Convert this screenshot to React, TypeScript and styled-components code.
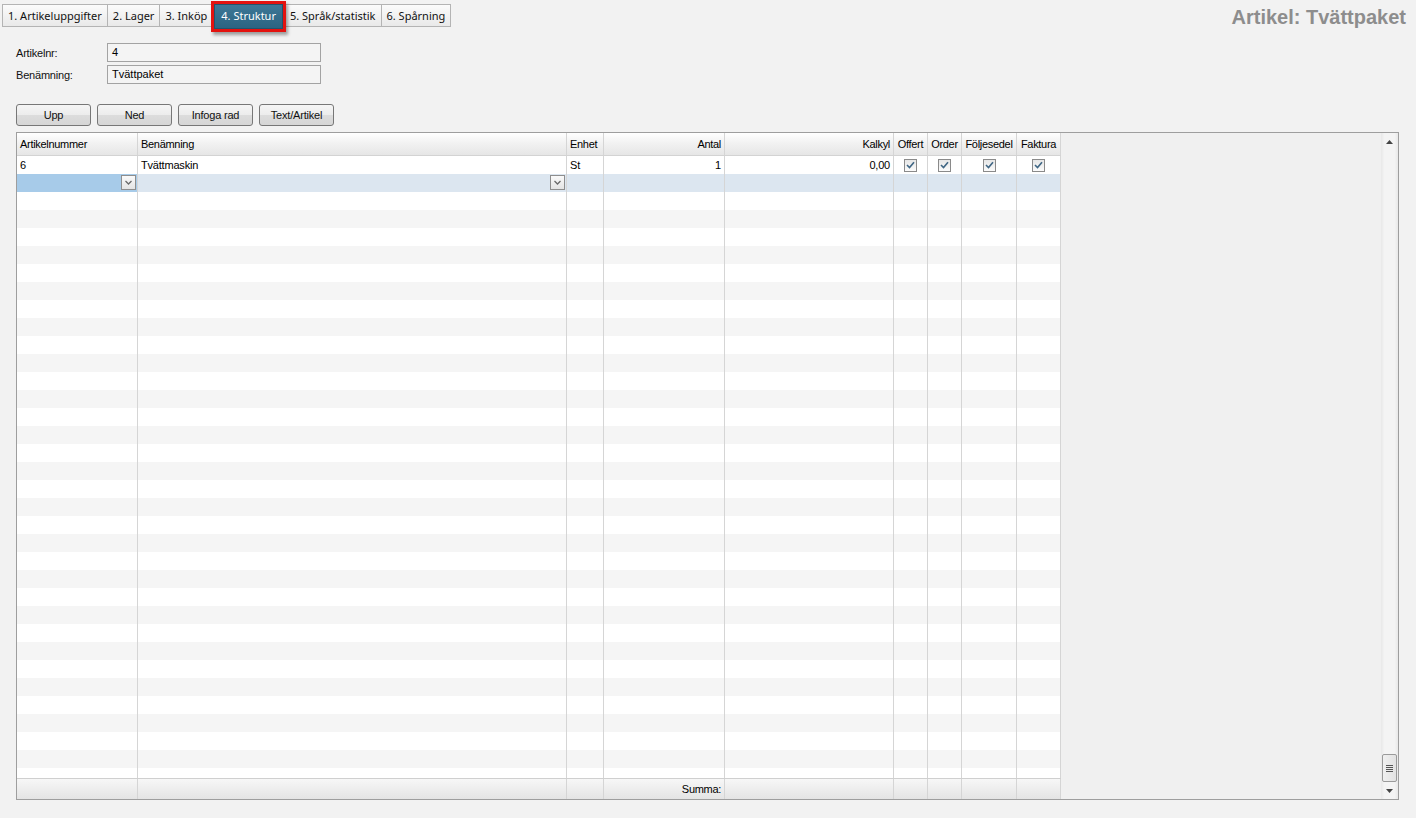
import React from 'react';
import styled, { createGlobalStyle } from 'styled-components';

const GlobalStyle = createGlobalStyle`
  html, body {
    margin: 0;
    padding: 0;
    background: #f2f2f2;
  }
  body {
    font-family: "Liberation Sans", Arial, sans-serif;
    color: #000;
  }
`;

const Page = styled.div`
  width: 1416px;
  height: 818px;
  overflow: hidden;
  box-sizing: border-box;
`;

const TopBar = styled.div`
  display: flex;
  justify-content: space-between;
  align-items: flex-start;
  height: 36px;
`;

const Tabs = styled.div`
  display: flex;
  align-items: flex-start;
  margin: 4px 0 0 3px;
`;

const Tab = styled.div<{ $active?: boolean }>`
  position: relative;
  height: ${p => (p.$active ? '25px' : '23px')};
  box-sizing: border-box;
  padding: ${p => (p.$active ? '0 6px 2px 6px' : '0 5px')};
  display: flex;
  align-items: center;
  font-family: "Noto Sans", "Open Sans", sans-serif;
  font-size: 11px;
  border: 1px solid #b4b4b4;
  margin-left: -1px;
  color: ${p => (p.$active ? '#fff' : '#111')};
  background: ${p =>
    p.$active
      ? 'linear-gradient(#3d7796, #2b6482)'
      : 'linear-gradient(#fbfbfb, #e9e9e9)'};
  ${p =>
    p.$active &&
    `
    z-index: 1;
    border-color: #24526b;
    outline: 3px solid #e3120f;
    box-shadow: 2px 3px 3px 3px rgba(0,0,0,0.35);
    margin: 0 2px 0 1px;
  `}
`;

const Title = styled.div`
  font-family: "Liberation Sans", Arial, sans-serif;
  font-weight: bold;
  font-size: 20px;
  color: #8d8d8d;
  margin: 6px 10px 0 0;
`;

const Form = styled.div`
  display: grid;
  grid-template-columns: 91px 214px;
  row-gap: 3px;
  margin: 7px 0 0 16px;
  align-items: center;
`;

const Label = styled.div`
  font-size: 11px;
  letter-spacing: -0.2px;
  color: #111;
`;

const Field = styled.div`
  height: 19px;
  box-sizing: border-box;
  border: 1px solid #a3a3a3;
  background: #f4f4f4;
  font-size: 11px;
  padding: 2px 0 0 4px;
`;

const ButtonRow = styled.div`
  display: flex;
  gap: 6px;
  margin: 20px 0 0 16px;
`;

const Button = styled.button`
  width: 75px;
  height: 22px;
  border: 1px solid #777;
  border-radius: 3px;
  background: linear-gradient(#f5f5f5 0%, #ececec 50%, #dcdcdc 51%, #d6d6d6 100%);
  font-family: "Liberation Sans", Arial, sans-serif;
  font-size: 11px;
  letter-spacing: -0.2px;
  color: #111;
  padding: 0;
`;

const Grid = styled.div`
  display: flex;
  margin: 6px 0 0 16px;
  width: 1383px;
  height: 668px;
  box-sizing: border-box;
  border: 1px solid #9e9e9e;
  background: #f0f0f0;
`;

const TableArea = styled.div`
  flex: 1;
  display: flex;
  flex-direction: column;
  overflow: hidden;
`;

const COLS = '121px 429px 37px 121px 169px 34px 34px 55px 44px';
const TABLE_W = '1044px';

const HeaderRow = styled.div`
  display: grid;
  grid-template-columns: ${COLS};
  width: ${TABLE_W};
  height: 23px;
  box-sizing: border-box;
  background: linear-gradient(#ffffff, #f2f2f2 45%, #e6e6e6);
  border-bottom: 1px solid #d3d3d3;
`;

const HeadCell = styled.div<{ $align?: string }>`
  border-right: 1px solid #d5d5d5;
  font-size: 11px;
  letter-spacing: -0.3px;
  padding: 0 3px;
  display: flex;
  align-items: center;
  justify-content: ${p => p.$align || 'flex-start'};
  white-space: nowrap;
  overflow: hidden;
`;

const Body = styled.div`
  flex: 1;
  overflow: hidden;
  width: ${TABLE_W};
`;

const Row = styled.div<{ $stripe?: boolean; $sel?: boolean }>`
  display: grid;
  grid-template-columns: ${COLS};
  height: 18px;
  background: ${p => (p.$sel ? '#dce6f0' : p.$stripe ? '#f5f5f5' : '#ffffff')};
`;

const Cell = styled.div<{ $align?: string; $hi?: boolean }>`
  position: relative;
  border-right: 1px solid #d5d5d5;
  font-size: 11px;
  letter-spacing: -0.2px;
  padding: 0 3px;
  display: flex;
  align-items: center;
  justify-content: ${p => p.$align || 'flex-start'};
  background: ${p => (p.$hi ? '#a7cbe9' : 'transparent')};
  white-space: nowrap;
`;

const DropBtn = styled.div`
  position: absolute;
  right: 1px;
  top: 1px;
  width: 15px;
  height: 15px;
  box-sizing: border-box;
  border: 1px solid #8e8e8e;
  background: linear-gradient(#fafafa, #e4e4e4);
  display: flex;
  align-items: center;
  justify-content: center;
`;

const Check = styled.div`
  width: 13px;
  height: 13px;
  box-sizing: border-box;
  border: 1px solid #8a8a8a;
  background: linear-gradient(#e6e6e6, #fbfbfb);
  display: flex;
  align-items: center;
  justify-content: center;
`;

const FooterRow = styled.div`
  display: grid;
  grid-template-columns: ${COLS};
  width: ${TABLE_W};
  height: 21px;
  box-sizing: border-box;
  border-top: 1px solid #cfcfcf;
  background: linear-gradient(#f7f7f7, #e4e4e4);
`;

const Scrollbar = styled.div`
  width: 17px;
  display: flex;
  flex-direction: column;
  justify-content: space-between;
  background: linear-gradient(90deg, #e8e8e8, #f4f4f4 20%, #f4f4f4 80%, #e8e8e8);
`;

const Arrow = styled.div`
  height: 17px;
  display: flex;
  align-items: center;
  justify-content: center;
`;

const Thumb = styled.div`
  margin: 0 1px;
  height: 28px;
  box-sizing: border-box;
  border: 1px solid #9a9a9a;
  border-radius: 2px;
  background: linear-gradient(90deg, #f0f0f0, #e2e2e2);
  display: flex;
  flex-direction: column;
  align-items: center;
  justify-content: center;
  gap: 1px;
`;

const Grip = styled.div`
  width: 7px;
  height: 1px;
  background: #555;
`;

const ScrollBottom = styled.div`
  display: flex;
  flex-direction: column;
`;

const Chevron = () => (
  <svg width="7" height="5" viewBox="0 0 7 5">
    <path d="M0.5 1 L3.5 4 L6.5 1" fill="none" stroke="#6a6a6a" strokeWidth="1.3" />
  </svg>
);

const Tick = () => (
  <svg width="9" height="8" viewBox="0 0 9 8">
    <path d="M1 4 L3.5 6.5 L8 1.2" fill="none" stroke="#3f6684" strokeWidth="1.6" />
  </svg>
);

const headers: { t: string; a?: string }[] = [
  { t: 'Artikelnummer' },
  { t: 'Benämning' },
  { t: 'Enhet' },
  { t: 'Antal', a: 'flex-end' },
  { t: 'Kalkyl', a: 'flex-end' },
  { t: 'Offert', a: 'center' },
  { t: 'Order', a: 'center' },
  { t: 'Följesedel', a: 'center' },
  { t: 'Faktura', a: 'center' },
];

const tabs = ['1. Artikeluppgifter', '2. Lager', '3. Inköp', '4. Struktur', '5. Språk/statistik', '6. Spårning'];

const App = () => {
  const emptyRows = Array.from({ length: 34 }, (_, i) => i);
  return (
    <Page>
      <GlobalStyle />
      <TopBar>
        <Tabs>
          {tabs.map(t => (
            <Tab key={t} $active={t === '4. Struktur'}>{t}</Tab>
          ))}
        </Tabs>
        <Title>Artikel: Tvättpaket</Title>
      </TopBar>

      <Form>
        <Label>Artikelnr:</Label>
        <Field>4</Field>
        <Label>Benämning:</Label>
        <Field>Tvättpaket</Field>
      </Form>

      <ButtonRow>
        <Button>Upp</Button>
        <Button>Ned</Button>
        <Button>Infoga rad</Button>
        <Button>Text/Artikel</Button>
      </ButtonRow>

      <Grid>
        <TableArea>
          <HeaderRow>
            {headers.map(h => (
              <HeadCell key={h.t} $align={h.a}>{h.t}</HeadCell>
            ))}
          </HeaderRow>
          <Body>
            <Row>
              <Cell>6</Cell>
              <Cell>Tvättmaskin</Cell>
              <Cell>St</Cell>
              <Cell $align="flex-end">1</Cell>
              <Cell $align="flex-end">0,00</Cell>
              <Cell $align="center"><Check><Tick /></Check></Cell>
              <Cell $align="center"><Check><Tick /></Check></Cell>
              <Cell $align="center"><Check><Tick /></Check></Cell>
              <Cell $align="center"><Check><Tick /></Check></Cell>
            </Row>
            <Row $sel>
              <Cell $hi><DropBtn><Chevron /></DropBtn></Cell>
              <Cell><DropBtn><Chevron /></DropBtn></Cell>
              <Cell />
              <Cell />
              <Cell />
              <Cell />
              <Cell />
              <Cell />
              <Cell />
            </Row>
            {emptyRows.map(i => (
              <Row key={i} $stripe={i % 2 === 1}>
                {headers.map(h => (
                  <Cell key={h.t} />
                ))}
              </Row>
            ))}
          </Body>
          <FooterRow>
            <HeadCell />
            <HeadCell />
            <HeadCell />
            <HeadCell $align="flex-end">Summa:</HeadCell>
            <HeadCell />
            <HeadCell />
            <HeadCell />
            <HeadCell />
            <HeadCell />
          </FooterRow>
        </TableArea>
        <Scrollbar>
          <Arrow>
            <svg width="7" height="4" viewBox="0 0 7 4"><path d="M0 4 L3.5 0 L7 4 Z" fill="#444" /></svg>
          </Arrow>
          <ScrollBottom>
            <Thumb>
              <Grip /><Grip /><Grip /><Grip />
            </Thumb>
            <Arrow>
              <svg width="7" height="4" viewBox="0 0 7 4"><path d="M0 0 L3.5 4 L7 0 Z" fill="#444" /></svg>
            </Arrow>
          </ScrollBottom>
        </Scrollbar>
      </Grid>
    </Page>
  );
};

export default App;
